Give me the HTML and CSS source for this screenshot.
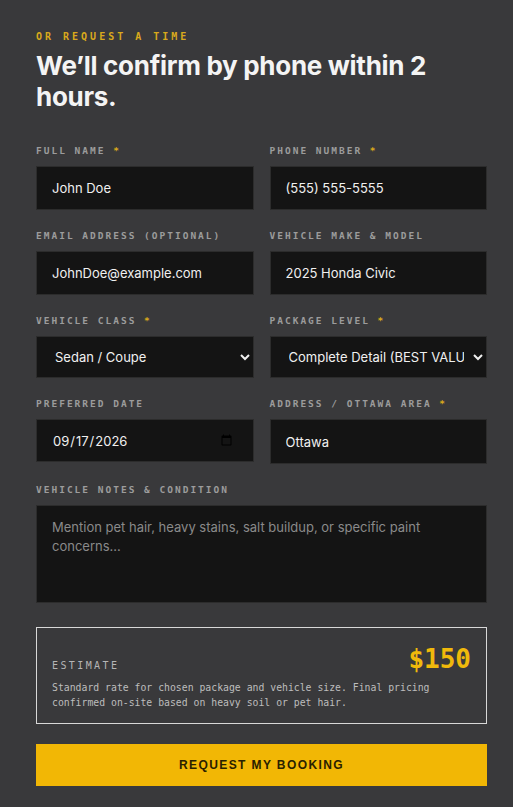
FILE: index.html
```html
<!DOCTYPE html>
<html lang="en">
<head>
<meta charset="utf-8">
<title>Request a time</title>
<link rel="stylesheet" href="styles.css">
</head>
<body>
<section class="booking">
  <p class="eyebrow">OR REQUEST A TIME</p>
  <h2 class="title">We’ll confirm by phone within 2 hours.</h2>
  <form class="form">
    <div class="field">
      <label class="label">FULL NAME <span class="req">*</span></label>
      <input class="control" type="text" value="John Doe">
    </div>
    <div class="field">
      <label class="label">PHONE NUMBER <span class="req">*</span></label>
      <input class="control" type="text" value="(555) 555-5555">
    </div>
    <div class="field">
      <label class="label">EMAIL ADDRESS (OPTIONAL)</label>
      <input class="control" type="text" value="JohnDoe@example.com">
    </div>
    <div class="field">
      <label class="label">VEHICLE MAKE &amp; MODEL</label>
      <input class="control" type="text" value="2025 Honda Civic">
    </div>
    <div class="field">
      <label class="label">VEHICLE CLASS <span class="req">*</span></label>
      <select class="control select"><option>Sedan / Coupe</option></select>
    </div>
    <div class="field">
      <label class="label">PACKAGE LEVEL <span class="req">*</span></label>
      <select class="control select"><option>Complete Detail (BEST VALUE)</option></select>
    </div>
    <div class="field">
      <label class="label">PREFERRED DATE</label>
      <input class="control date" type="date" value="2026-09-17">
    </div>
    <div class="field">
      <label class="label">ADDRESS / OTTAWA AREA <span class="req">*</span></label>
      <input class="control tall" type="text" value="Ottawa">
    </div>
    <div class="field wide">
      <label class="label">VEHICLE NOTES &amp; CONDITION</label>
      <textarea class="control notes" placeholder="Mention pet hair, heavy stains, salt buildup, or specific paint concerns..."></textarea>
    </div>
    <div class="estimate wide">
      <div class="estimate-row">
        <span class="estimate-label">ESTIMATE</span>
        <span class="estimate-price">$150</span>
      </div>
      <p class="estimate-note">Standard rate for chosen package and vehicle size. Final pricing confirmed on-site based on heavy soil or pet hair.</p>
    </div>
    <button class="submit wide" type="button">REQUEST MY BOOKING</button>
  </form>
</section>
</body>
</html>
```

FILE: styles.css
```css
html, body {
  margin: 0;
  padding: 0;
  background: #39393b;
}

.booking {
  padding: 31px 26px 22px 36px;
  font-family: Inter, "Noto Sans", sans-serif;
  color: #f2f2f2;
}

.eyebrow {
  margin: 0;
  font-family: "DejaVu Sans Mono", "Liberation Mono", monospace;
  font-size: 10px;
  font-weight: bold;
  line-height: 12px;
  letter-spacing: 3px;
  color: #d9a91c;
}

.title {
  margin: 7px 0 0;
  font-size: 26px;
  line-height: 31px;
  font-weight: 700;
  letter-spacing: -0.3px;
  color: #f4f4f4;
  max-width: 420px;
}

.form {
  margin-top: 33px;
  display: grid;
  grid-template-columns: 1fr 1fr;
  column-gap: 16px;
  row-gap: 20px;
}

.field {
  display: flex;
  flex-direction: column;
  gap: 9px;
}

.wide {
  grid-column: 1 / -1;
}

.label {
  font-family: "DejaVu Sans Mono", "Liberation Mono", monospace;
  font-size: 9.5px;
  font-weight: bold;
  line-height: 12px;
  letter-spacing: 2px;
  color: #9c9c9c;
  white-space: nowrap;
}

.req {
  color: #d9a91c;
}

.control {
  box-sizing: border-box;
  width: 100%;
  height: 44px;
  margin: 0;
  padding: 0 15px;
  background: #141414;
  border: 1px solid #2c2c2c;
  border-radius: 0;
  color: #f0f0f0;
  font-family: Inter, "Noto Sans", sans-serif;
  font-size: 13px;
  outline: none;
}

.select {
  height: 42px;
  padding: 0 6px 0 14px;
}

.date {
  height: 43px;
  padding: 0 18px 0 15px;
}

.tall {
  height: 45px;
}

.notes {
  height: 98px;
  padding: 12px 15px;
  line-height: 19px;
  resize: none;
}

.notes::placeholder {
  color: #8a8a8a;
}

.estimate {
  margin-top: 4px;
  border: 1px solid #d8d8d8;
  padding: 17px 15px 13px;
}

.estimate-row {
  display: flex;
  justify-content: space-between;
  align-items: flex-end;
}

.estimate-label {
  font-family: "DejaVu Sans Mono", "Liberation Mono", monospace;
  font-size: 10px;
  line-height: 12px;
  letter-spacing: 2.4px;
  color: #b5b5b5;
  margin-bottom: 1px;
}

.estimate-price {
  font-family: "DejaVu Sans Mono", "Liberation Mono", monospace;
  font-size: 26px;
  font-weight: bold;
  line-height: 28px;
  color: #f0b90b;
}

.estimate-note {
  margin: 7px 0 0;
  font-family: "DejaVu Sans Mono", "Liberation Mono", monospace;
  font-size: 9.8px;
  line-height: 15px;
  color: #bdbdbd;
}

.submit {
  margin-top: 0;
  height: 42px;
  border: none;
  border-radius: 0;
  background: #f2b705;
  color: #2a2100;
  font-family: "Liberation Sans", Arial, sans-serif;
  font-size: 12px;
  font-weight: bold;
  letter-spacing: 1.4px;
}
```
